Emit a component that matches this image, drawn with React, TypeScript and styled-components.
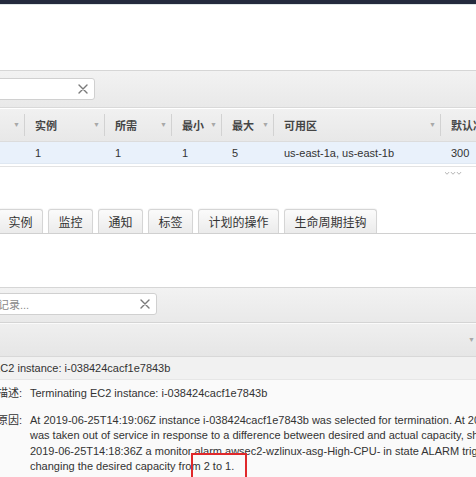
import React from 'react';
import styled, { createGlobalStyle } from 'styled-components';

const GlobalStyle = createGlobalStyle`
  html, body {
    margin: 0;
    padding: 0;
    background: #ffffff;
  }
  body {
    font-family: "Liberation Sans", Arial, "Noto Sans CJK SC", sans-serif;
    font-size: 11px;
    color: #333333;
  }
`;

const columns = [
  { label: '', width: 25, value: '' },
  { label: '实例', width: 80, value: '1' },
  { label: '所需', width: 67, value: '1' },
  { label: '最小', width: 50, value: '1' },
  { label: '最大', width: 52, value: '5' },
  { label: '可用区', width: 167, value: 'us-east-1a, us-east-1b' },
  { label: '默认冷却', width: 0, value: '300' },
];

const tabs = ['实例', '监控', '通知', '标签', '计划的操作', '生命周期挂钩'];

const reasonLines = [
  'At 2019-06-25T14:19:06Z instance i-038424cacf1e7843b was selected for termination. At 2019-06-25T14:19:06Z an instance',
  'was taken out of service in response to a difference between desired and actual capacity, shrinking the capacity from 2 to 1.',
  '2019-06-25T14:18:36Z a monitor alarm awsec2-wzlinux-asg-High-CPU- in state ALARM triggered policy awsec2-wzlinux-asg-High-CPU-',
  'changing the desired capacity from 2 to 1.',
];

const gridTemplate = columns.map((c) => (c.width ? `${c.width}px` : '1fr')).join(' ');

const ClearIcon = () => (
  <svg width="10" height="10" viewBox="0 0 10 10">
    <path d="M1 1 L9 9 M9 1 L1 9" stroke="#7a7a7a" strokeWidth="1.4" strokeLinecap="round" />
  </svg>
);

const App = () => {
  return (
    <>
      <GlobalStyle />
      <Viewport>
        <TopBar />

        <Toolbar $top={65} $height={37}>
          <SearchBox $shift={-10} $width={105}>
            <span />
            <ClearIcon />
          </SearchBox>
        </Toolbar>

        <HeaderRow $template={gridTemplate}>
          {columns.map((c, i) => (
            <HeaderCell key={i} $sep={i < columns.length - 1}>
              <span>{c.label}</span>
              {i < columns.length - 1 && <Caret>▼</Caret>}
            </HeaderCell>
          ))}
        </HeaderRow>
        <DataRow $template={gridTemplate}>
          {columns.map((c, i) => (
            <DataCell key={i}>{c.value}</DataCell>
          ))}
        </DataRow>

        <TableFooter>
          <svg width="18" height="6" viewBox="0 0 18 6">
            {[2, 8, 14].map((x) => (
              <path key={x} d={`M${x - 2} 1 Q${x} 5 ${x + 2} 1`} stroke="#b8b8b8" strokeWidth="1" fill="none" />
            ))}
          </svg>
        </TableFooter>

        <TabBar>
          {tabs.map((t) => (
            <Tab key={t}>{t}</Tab>
          ))}
        </TabBar>

        <Toolbar $top={53} $height={35}>
          <SearchBox $shift={-10} $width={167} $offsetY={-1}>
            <Placeholder>记录...</Placeholder>
            <ClearIcon />
          </SearchBox>
        </Toolbar>

        <SectionHeader>
          <Caret>▼</Caret>
        </SectionHeader>

        <EventRow>EC2 instance: i-038424cacf1e7843b</EventRow>

        <Details>
          <DetailRow>
            <DetailLabel>描述:</DetailLabel>
            <DetailValue>
              <Line>Terminating EC2 instance: i-038424cacf1e7843b</Line>
            </DetailValue>
          </DetailRow>
          <DetailRow>
            <DetailLabel>原因:</DetailLabel>
            <DetailValue>
              {reasonLines.map((l, i) => (
                <Line key={i}>{l}</Line>
              ))}
            </DetailValue>
          </DetailRow>
        </Details>

        <Highlight />
      </Viewport>
    </>
  );
};

export default App;

const Viewport = styled.div`
  position: relative;
  width: 476px;
  height: 477px;
  overflow: hidden;
  background: #ffffff;
`;

const TopBar = styled.div`
  height: 4px;
  background: #242a3d;
  border-bottom: 1px solid #dfe7e7;
`;

const Toolbar = styled.div<{ $top: number; $height: number }>`
  margin-top: ${(p) => p.$top}px;
  height: ${(p) => p.$height}px;
  box-sizing: border-box;
  border-top: 1px solid #d6d6d6;
  background: linear-gradient(#f2f2f2, #e9e9e9);
  display: flex;
  align-items: center;
`;

const SearchBox = styled.div<{ $shift: number; $width: number; $offsetY?: number }>`
  margin-left: ${(p) => p.$shift}px;
  margin-top: ${(p) => (p.$offsetY || 0) * 2}px;
  width: ${(p) => p.$width}px;
  height: 22px;
  box-sizing: border-box;
  background: #ffffff;
  border: 1px solid #d0d0d0;
  border-radius: 3px;
  display: flex;
  align-items: center;
  justify-content: space-between;
  padding: 0 6px 0 7px;
`;

const Placeholder = styled.span`
  color: #8a8a8a;
  font-size: 11px;
`;

const HeaderRow = styled.div<{ $template: string }>`
  display: grid;
  grid-template-columns: ${(p) => p.$template};
  height: 35px;
  box-sizing: border-box;
  border-top: 1px solid #d9d9d9;
  border-bottom: 1px solid #dcdcdc;
  background: linear-gradient(#f1f1f1, #e8e8e8);
  box-shadow: inset 0 1px 0 #ffffff;
`;

const HeaderCell = styled.div<{ $sep: boolean }>`
  position: relative;
  display: flex;
  align-items: center;
  justify-content: space-between;
  padding: 0 5px 0 10px;
  font-weight: bold;
  color: #454545;
  white-space: nowrap;
  overflow: hidden;

  &::after {
    content: '';
    display: ${(p) => (p.$sep ? 'block' : 'none')};
    position: absolute;
    right: 0;
    top: 6px;
    bottom: 5px;
    width: 1px;
    background: #d2d2d2;
    box-shadow: 1px 0 0 #fafafa;
  }
`;

const Caret = styled.span`
  font-size: 7px;
  color: #a8a8a8;
  font-weight: normal;
`;

const DataRow = styled.div<{ $template: string }>`
  display: grid;
  grid-template-columns: ${(p) => p.$template};
  height: 22px;
  background: #e9f1fb;
  border-bottom: 1px solid #dfe8f2;
  box-sizing: border-box;
`;

const DataCell = styled.div`
  display: flex;
  align-items: center;
  padding-left: 10px;
  color: #333333;
  white-space: nowrap;
  overflow: hidden;
`;

const TableFooter = styled.div`
  margin-top: 2px;
  height: 43px;
  box-sizing: border-box;
  border-top: 1px solid #e3e3e3;
  display: flex;
  justify-content: flex-end;
  align-items: flex-start;
  padding: 4px 13px 0 0;
`;

const TabBar = styled.div`
  display: flex;
  align-items: flex-end;
  gap: 5px;
  padding-left: 0;
  margin-left: -2px;
  height: 25px;
  box-sizing: border-box;
  border-bottom: 1px solid #d0d0d0;
`;

const Tab = styled.div`
  height: 24px;
  box-sizing: border-box;
  padding: 0 9.5px;
  display: flex;
  align-items: center;
  font-size: 12px;
  color: #333333;
  white-space: nowrap;
  background: linear-gradient(#fbfbfb, #ebebeb);
  border: 1px solid #d5d5d5;
  border-bottom: none;
  border-radius: 3px 3px 0 0;
  box-shadow: 0 -1px 1px rgba(0, 0, 0, 0.04);
`;

const SectionHeader = styled.div`
  height: 35px;
  box-sizing: border-box;
  border-top: 1px solid #d4d4d4;
  border-bottom: 1px solid #d8d8d8;
  background: linear-gradient(#efefef, #e6e6e6);
  box-shadow: inset 0 1px 0 #fafafa;
  display: flex;
  align-items: center;
  justify-content: flex-end;
  padding-right: 1px;
`;

const EventRow = styled.div`
  height: 23px;
  box-sizing: border-box;
  background: #f1f1f1;
  border-bottom: 1px solid #e6e6e6;
  display: flex;
  align-items: center;
  padding-left: 0;
  text-indent: -7px;
  white-space: nowrap;
  color: #333333;
`;

const Details = styled.div`
  background: #fafafa;
  padding-top: 6px;
  margin-left: -3px;
  display: flex;
  flex-direction: column;
  gap: 11.5px;
  height: 100px;
`;

const DetailRow = styled.div`
  display: flex;
`;

const DetailLabel = styled.div`
  width: 33px;
  flex: none;
  line-height: 15.4px;
  color: #333333;
`;

const DetailValue = styled.div`
  display: flex;
  flex-direction: column;
`;

const Line = styled.div`
  line-height: 15.4px;
  white-space: nowrap;
  color: #333333;
`;

const Highlight = styled.div`
  position: absolute;
  left: 191px;
  top: 453px;
  width: 56px;
  height: 40px;
  box-sizing: border-box;
  border: 2px solid #e0282b;
`;
